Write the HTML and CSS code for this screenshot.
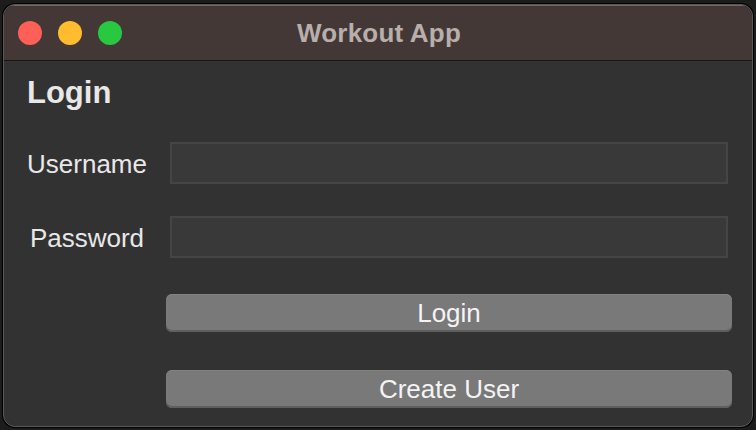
FILE: index.html
```html
<!DOCTYPE html>
<html>
<head>
<meta charset="utf-8">
<link rel="stylesheet" href="styles.css">
</head>
<body>
<div class="window">
  <div class="titlebar">
    <div class="lights">
      <span class="light red"></span>
      <span class="light yellow"></span>
      <span class="light green"></span>
    </div>
    <div class="title">Workout App</div>
  </div>
  <div class="content">
    <h1 class="heading">Login</h1>
    <div class="form">
      <div class="row">
        <label class="label">Username</label>
        <div class="input"></div>
      </div>
      <div class="row">
        <label class="label">Password</label>
        <div class="input"></div>
      </div>
    </div>
    <div class="buttons">
      <button class="btn">Login</button>
      <button class="btn">Create User</button>
    </div>
  </div>
</div>
</body>
</html>
```
FILE: styles.css
```css
html, body {
  margin: 0;
  padding: 0;
  background: #1c1c1c;
  width: 756px;
  height: 430px;
  overflow: hidden;
}
body {
  padding: 3px 3px 4px 3px;
  box-sizing: border-box;
  font-family: "Liberation Sans", Arial, sans-serif;
}
.window {
  width: 750px;
  height: 423px;
  box-sizing: border-box;
  margin-top: 1px;
  border-radius: 12px;
  border: 1px solid #5e5856;
  background: #323232;
  overflow: hidden;
  display: flex;
  flex-direction: column;
  box-shadow: 0 0 0 1px #000;
}
.titlebar {
  height: 56px;
  flex: none;
  background: #433836;
  border-top: 1px solid #6f6663;
  box-sizing: border-box;
  border-bottom: 1px solid #161616;
  position: relative;
  display: flex;
  align-items: center;
  justify-content: center;
}
.lights {
  position: absolute;
  left: 14px;
  top: 15px;
  display: flex;
  gap: 16px;
}
.light {
  width: 24px;
  height: 24px;
  border-radius: 50%;
  display: block;
}
.red { background: #fe5f57; }
.yellow { background: #febc2e; }
.green { background: #28c840; }
.title {
  color: #b8aeab;
  font-weight: bold;
  font-size: 26px;
  letter-spacing: 0.2px;
  margin-left: 2px;
}
.content {
  padding: 12px 0 0 0;
  display: flex;
  flex-direction: column;
}
.heading {
  margin: 3px 0 0 23px;
  font-size: 31px;
  line-height: 34px;
  font-weight: bold;
  color: #e8e8e8;
}
.form {
  margin-top: 32px;
  display: flex;
  flex-direction: column;
  gap: 32px;
}
.row {
  display: flex;
  align-items: center;
}
.label {
  width: 166px;
  text-align: center;
  color: #e8e8e8;
  font-size: 26px;
  line-height: 30px;
  margin-top: 1px;
}
.input {
  width: 558px;
  height: 42px;
  box-sizing: border-box;
  background: #393939;
  border: 2px solid #454545;
}
.buttons {
  margin: 36px 0 0 162px;
  display: flex;
  flex-direction: column;
  gap: 38px;
}
.btn {
  width: 566px;
  height: 38px;
  border: none;
  border-radius: 6px;
  background: #797979;
  box-shadow: inset 0 -2px 0 #5f5f5f, inset 0 1px 0 #828282;
  color: #f4f4f4;
  font-family: "Liberation Sans", Arial, sans-serif;
  font-size: 26px;
  line-height: 36px;
  padding: 0 0 1px 0;
}
```
